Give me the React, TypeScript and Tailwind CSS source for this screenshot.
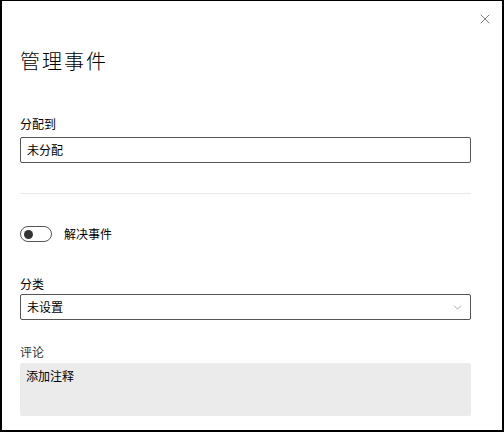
import { X, ChevronDown } from 'lucide-react'

export default function App() {
  return (
    <div
      className="w-[504px] h-[432px] bg-white border-t border-l-2 border-r-2 border-b-2 border-black overflow-hidden text-black"
      style={{ fontFamily: '"Noto Sans CJK SC", "Noto Sans", sans-serif' }}
    >
      <div className="flex justify-end pt-[10px] pr-[9px]">
        <button className="w-[16px] h-[16px] flex items-center justify-center text-[#605e5c]">
          <X className="w-[16px] h-[16px]" strokeWidth={1.2} />
        </button>
      </div>

      <div className="px-[18px]">
        <h1 className="mt-[20px] text-[20px] leading-[28px] font-light tracking-[2px] text-black">管理事件</h1>

        <label className="block mt-[41px] text-[12px] leading-[16px]">分配到</label>
        <div className="mt-[5px] h-[26px] w-[451px] border border-[#555] rounded-[2px] flex items-center px-[6px] text-[12px]">
          未分配
        </div>

        <div className="mt-[30px] w-[451px] h-px bg-[#edebe9]" />

        <div className="mt-[32px] flex items-center gap-[12px]">
          <div className="w-[32px] h-[16px] rounded-full border border-[#555] flex items-center px-[3px]">
            <div className="w-[9px] h-[9px] rounded-full bg-[#333]" />
          </div>
          <span className="text-[12px] leading-[16px]">解决事件</span>
        </div>

        <label className="block mt-[34px] text-[12px] leading-[16px]">分类</label>
        <div className="mt-[2px] h-[26px] w-[451px] border border-[#555] rounded-[2px] flex items-center justify-between pl-[6px] pr-[6px] text-[12px]">
          <span>未设置</span>
          <ChevronDown className="w-[13px] h-[13px] text-[#8a8886]" strokeWidth={1.3} />
        </div>

        <label className="block mt-[24px] text-[12px] leading-[16px] text-[#333]">评论</label>
        <div className="mt-[3px] h-[53px] w-[451px] bg-[#ebebeb] rounded-[2px] px-[6px] pt-[4px] text-[12px] leading-[18px]">
          添加注释
        </div>
      </div>
    </div>
  )
}
